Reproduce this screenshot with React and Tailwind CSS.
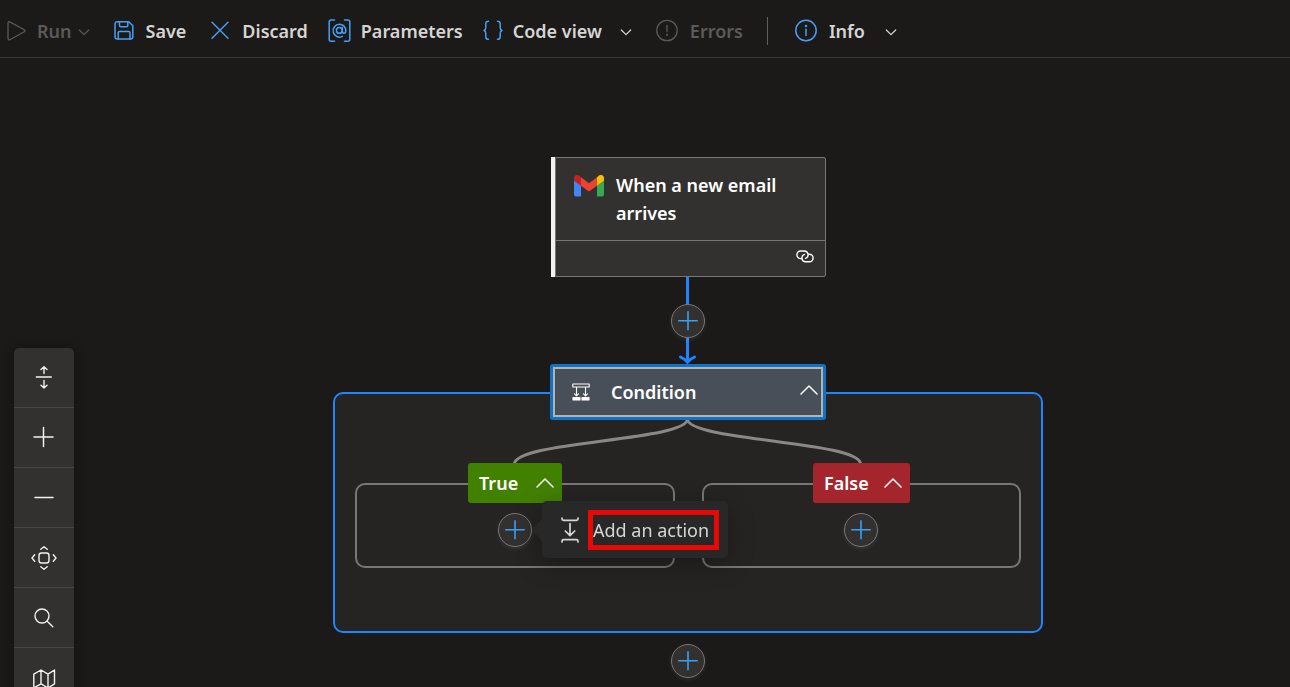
import React from 'react';

const stroke = { fill: 'none', stroke: 'currentColor', strokeLinecap: 'round', strokeLinejoin: 'round' };

function Icon({ w = 24, h = 24, sw = 1.4, className = '', children }) {
  return (
    <svg width={w} height={h} viewBox={`0 0 ${w} ${h}`} strokeWidth={sw} {...stroke} className={`shrink-0 ${className}`} aria-hidden="true">
      {children}
    </svg>
  );
}

const PlayIcon = () => (
  <Icon w={20} h={24} sw={1.3}>
    <path d="M1 4v15.600c0 1 .9 1.600 1.800 1.100l14.500-7.900c.9-.5.9-1.600 0-2.100L2.800 2.900C1.900 2.400 1 3 1 4z" />
  </Icon>
);
const SaveIcon = () => (
  <Icon w={20} h={24} sw={1.5}>
    <path d="M3.2 2.700h11.600l4 4v11.100a2.300 2.300 0 0 1-2.300 2.300H3.300A2.300 2.300 0 0 1 1 17.800V4.900a2.200 2.200 0 0 1 2.200-2.200z" />
    <path d="M5.500 2.700v3.800c0 .8.500 1.300 1.300 1.300h5.700c.8 0 1.300-.5 1.300-1.300V2.700M4.200 20v-6.200c0-.9.500-1.400 1.400-1.400h9c.9 0 1.400.5 1.400 1.400V20" />
  </Icon>
);
const CloseIcon = () => (
  <Icon w={20} h={24} sw={1.5}>
    <path d="M2 3.300l16 16M18 3.300l-16 16" />
  </Icon>
);
const ParametersIcon = () => (
  <Icon w={23} h={24} sw={1.5}>
    <path d="M6.500 1H3.200c-1.300 0-2 .7-2 2v17.200c0 1.300.7 2 2 2h3.300M16.500 1h3.300c1.300 0 2 .7 2 2v17.200c0 1.300-.7 2-2 2h-3.300" />
    <circle cx="11.300" cy="11.400" r="2.900" />
    <path d="M14.300 8.600v3.500c0 1.400.7 2.200 1.700 2.200s1.800-.9 1.800-2.700c0-3.600-2.700-6.300-6.400-6.300a6.400 6.400 0 1 0 3 12.100" />
  </Icon>
);
const BracesIcon = () => (
  <Icon w={20} h={24} sw={1.5}>
    <path d="M5.500 2.200c-1.900 0-2.700.9-2.700 2.600v3.700c0 1.700-.5 2.500-1.800 3 1.300.5 1.800 1.300 1.800 3v3.200c0 1.700.8 2.600 2.700 2.600M14.500 2.200c1.900 0 2.700.9 2.700 2.600v3.700c0 1.700.5 2.500 1.800 3-1.300.5-1.800 1.300-1.800 3v3.200c0 1.700-.8 2.600-2.700 2.600" />
  </Icon>
);
const ErrorIcon = () => (
  <Icon w={22} h={24} sw={1.3}>
    <circle cx="11" cy="11.500" r="10.200" />
    <path d="M11 6.500v6.200" />
    <circle cx="11" cy="15.900" r=".4" />
  </Icon>
);
const InfoIcon = () => (
  <Icon w={22} h={24} sw={1.5}>
    <circle cx="11" cy="11.500" r="10.200" />
    <path d="M11 10.200v6.400" />
    <circle cx="11" cy="6.900" r=".5" />
  </Icon>
);
const ChevronDown = ({ className }) => (
  <Icon w={12} h={8} sw={1.2} className={`relative top-px ${className}`}>
    <path d="M1.300 2l4.700 4.700L10.700 2" />
  </Icon>
);
const ChevronUp = () => (
  <Icon w={18} h={12} sw={1.5}>
    <path d="M1 10l8-8 8 8" />
  </Icon>
);

function Command({ icon, label, disabled, chevron, className = '' }) {
  return (
    <button
      type="button"
      disabled={disabled}
      className={`flex items-center whitespace-nowrap font-semibold ${disabled ? 'text-[#5c5a58]' : 'text-[#d6d5d4]'} ${className}`}
    >
      <span className={`flex ${disabled ? '' : 'text-[#479ef5]'}`}>{icon}</span>
      <span>{label}</span>
      {chevron && <ChevronDown className={chevron} />}
    </button>
  );
}

function AddButton({ label, className }) {
  return (
    <button
      type="button"
      aria-label={label}
      className={`absolute flex size-[34px] items-center justify-center rounded-full border border-[#797775] bg-[#323130] text-[#3aa0f3] shadow-[0_2px_4px_rgba(255,255,255,0.08)] ${className}`}
    >
      <Icon w={20} h={20} sw={1.6}>
        <path d="M10 .8v18M.8 9.800h18.400" />
      </Icon>
    </button>
  );
}

function Branch({ label, color, className }) {
  return (
    <button
      type="button"
      aria-expanded="true"
      className={`absolute flex h-10 items-center justify-between rounded-[3px] pr-2 pl-[11px] font-semibold text-white ${color} ${className}`}
    >
      <span>{label}</span>
      <ChevronUp />
    </button>
  );
}

function RailButton({ label, children }) {
  return (
    <button type="button" aria-label={label} className="flex h-[60px] items-center justify-center border-b border-[#484644] text-[#f3f2f1]">
      {children}
    </button>
  );
}

function Rail() {
  return (
    <div className="absolute top-[290px] left-[14px] flex w-[60px] flex-col rounded-t-[5px] bg-[#323130] shadow-[0_0_12px_rgba(0,0,0,0.35)]">
      <RailButton label="Collapse or expand">
        <Icon>
          <path d="M4.300 11h15M12 7.500V.8M9 3.500l3-2.700 3 2.700M12 14.500v7.300M9 19.200l3 2.700 3-2.700" />
        </Icon>
      </RailButton>
      <RailButton label="Zoom in">
        <Icon sw={1.5}>
          <path d="M11.500 1.500v19M2 11h19" />
        </Icon>
      </RailButton>
      <RailButton label="Zoom out">
        <Icon sw={1.5}>
          <path d="M3 11.500h18" />
        </Icon>
      </RailButton>
      <RailButton label="Fit view">
        <Icon w={26}>
          <rect x="8" y="7" width="10" height="10" rx="2.500" />
          <path d="M9.800 3.300L13 .8l3.200 2.500M9.800 20.700l3.200 2.500 3.200-2.500M3.700 8.800L1 12l2.700 3.200M22.300 8.800L25 12l-2.700 3.200" />
        </Icon>
      </RailButton>
      <RailButton label="Search">
        <Icon>
          <circle cx="10" cy="10" r="7" />
          <path d="M15.200 15.200l5.600 5.600" />
        </Icon>
      </RailButton>
      <RailButton label="Toggle minimap">
        <Icon>
          <path d="M1.800 8.200L9 4l7 4.200L22.500 4v13.800L16 22l-7-4.200L1.800 22zM9 4v13.800M16 8.200V22" />
        </Icon>
      </RailButton>
    </div>
  );
}

function GmailLogo() {
  return (
    <svg width="30" height="22" viewBox="0 0 30 22" className="mt-1 shrink-0" aria-hidden="true">
      <path fill="#4285f4" d="M2 21.500h5V10.500L0 5v14.500c0 1.100.9 2 2 2z" />
      <path fill="#34a853" d="M23 21.500h5c1.100 0 2-.9 2-2V5l-7 5.500z" />
      <path fill="#fbbc04" d="M23 2.200v8.500l7-5.300V3c0-2.600-2.900-4-5-2.500z" />
      <path fill="#ea4335" d="M7 10.700V2.200l8 6 8-6v8.500l-8 5.800z" />
      <path fill="#c5221f" d="M0 3v2.400l7 5.300V2.200L5 .5C2.900-1 0 .4 0 3z" />
    </svg>
  );
}

export default function App() {
  return (
    <div className="flex h-screen flex-col overflow-hidden bg-[#1b1a19] font-['Noto_Sans','Open_Sans',sans-serif] text-[18px] leading-7">
      <header className="flex h-[58px] shrink-0 items-center border-b border-[#3b3a39] pt-1 pl-[7px]">
        <Command icon={<PlayIcon />} label="Run" disabled chevron="-ml-1" className="mr-6 gap-[10px]" />
        <Command icon={<SaveIcon />} label="Save" className="mr-6 gap-3" />
        <Command icon={<CloseIcon />} label="Discard" className="mr-5 gap-3" />
        <Command icon={<ParametersIcon />} label="Parameters" className="mr-5 gap-[10px]" />
        <Command icon={<BracesIcon />} label="Code view" chevron="ml-2" className="mr-6 gap-[10px]" />
        <Command icon={<ErrorIcon />} label="Errors" disabled className="mr-6 gap-3" />
        <span className="mr-[27px] h-7 w-px bg-[#605e5c]" />
        <Command icon={<InfoIcon />} label="Info" chevron="ml-2" className="gap-3" />
      </header>

      <main className="relative grow overflow-hidden">
        <section aria-label="Condition scope" className="absolute top-[334px] left-[333px] h-[241px] w-[710px] rounded-[10px] border-2 border-[#1f85ff] bg-[#252423]" />
        <div className="absolute top-[425px] left-[355px] h-[85px] w-[320px] rounded-[10px] border-2 border-[#797775]" />
        <div className="absolute top-[425px] left-[702px] h-[85px] w-[319px] rounded-[10px] border-2 border-[#797775]" />

        <svg width="1044" height="640" viewBox="0 0 1044 640" fill="none" className="pointer-events-none absolute top-0 left-0" aria-hidden="true">
          <path d="M687.500 218v87" stroke="#1f85ff" strokeWidth="3" />
          <path d="M680.500 299q4.500 2 7 5.200q2.500-3.200 7-5.200" stroke="#1f85ff" strokeWidth="3" strokeLinecap="round" />
          <path d="M687.500 361C687.500 383 514.500 383 514.500 406M687.500 361C687.500 383 860.500 383 860.500 406" stroke="#8a8886" strokeWidth="3" />
        </svg>

        <article className="absolute top-[99px] left-[551px] flex w-[275px] border-l-4 border-[#f3f2f1] text-white">
          <div className="grow rounded-r-[2px] border border-[#797775] bg-[#323130]">
            <div className="flex h-[82px] gap-3 pt-[13px] pr-8 pl-[18px]">
              <GmailLogo />
              <h2 className="font-semibold">When a new email arrives</h2>
            </div>
            <div className="flex h-9 items-center justify-end border-t border-[#797775] pr-[11px] pb-1">
              <Icon w={18} h={13} sw={1.4}>
                <path d="M5.500 8.600h-.8a3.800 3.800 0 0 1 0-7.600h3.600a3.800 3.800 0 0 1 1.200 7.400" />
                <path d="M12.500 4.200h.8a3.800 3.800 0 0 1 0 7.600H9.700a3.800 3.800 0 0 1-1.200-7.400" />
              </Icon>
            </div>
          </div>
        </article>

        <AddButton label="Insert a step" className="top-[246px] left-[671px]" />

        <button
          type="button"
          aria-expanded="true"
          className="absolute top-[306px] left-[550px] flex w-[276px] rounded-[3px] border-[3px] border-[#0f74c8] font-semibold text-white"
        >
          <span className="flex h-[50px] grow items-center border-2 border-[#b3b2b1] bg-[#484f59] pr-[3px] pl-[17px]">
            <Icon w={18} h={18} sw={1.1}>
              <path d="M.8 1h16.400v3H.8zM4.500 4v8.500M13.500 4v8.500M2.500 10.800l2 2 2-2M11.500 10.800l2 2 2-2" />
              <path d="M1 14.500h7v2.500H1zM10 14.500h7v2.500h-7z" fill="currentColor" />
            </Icon>
            <span className="ml-[21px] grow text-left">Condition</span>
            <span className="pb-1">
              <ChevronUp />
            </span>
          </span>
        </button>

        <Branch label="True" color="bg-[#428000]" className="top-[405px] left-[468px] w-[94px]" />
        <Branch label="False" color="bg-[#a4262c]" className="top-[405px] left-[813px] w-[97px]" />

        <AddButton label="Add to True branch" className="top-[455px] left-[498px]" />
        <AddButton label="Add to False branch" className="top-[455px] left-[844px]" />
        <AddButton label="Add a step after condition" className="top-[586px] left-[671px]" />

        <div role="menu" className="absolute top-[443px] left-[532px] flex items-center drop-shadow-[0_6px_12px_rgba(0,0,0,0.3)]">
          <svg width="10" height="22" viewBox="0 0 10 22" aria-hidden="true">
            <path d="M10 0v22L0 11z" fill="#292828" />
          </svg>
          <button type="button" role="menuitem" className="flex h-[57px] w-[186px] items-center gap-2 rounded-[5px] bg-[#292828] pl-[18px] text-[#d6d6d6]">
            <Icon w={20} h={26} sw={1.7}>
              <path d="M2 1v.8c0 1 .6 1.600 1.600 1.600h12.800c1 0 1.600-.6 1.600-1.600V1M2 25v-.8c0-1 .6-1.600 1.600-1.600h12.800c1 0 1.600.6 1.600 1.600v.8M10 6.500v12M5.300 14l4.700 4.700 4.700-4.700" />
            </Icon>
            <span className="flex h-10 w-[131px] items-center border-[5px] border-[#e80808] whitespace-nowrap">Add an action</span>
          </button>
        </div>

        <Rail />
      </main>
    </div>
  );
}
